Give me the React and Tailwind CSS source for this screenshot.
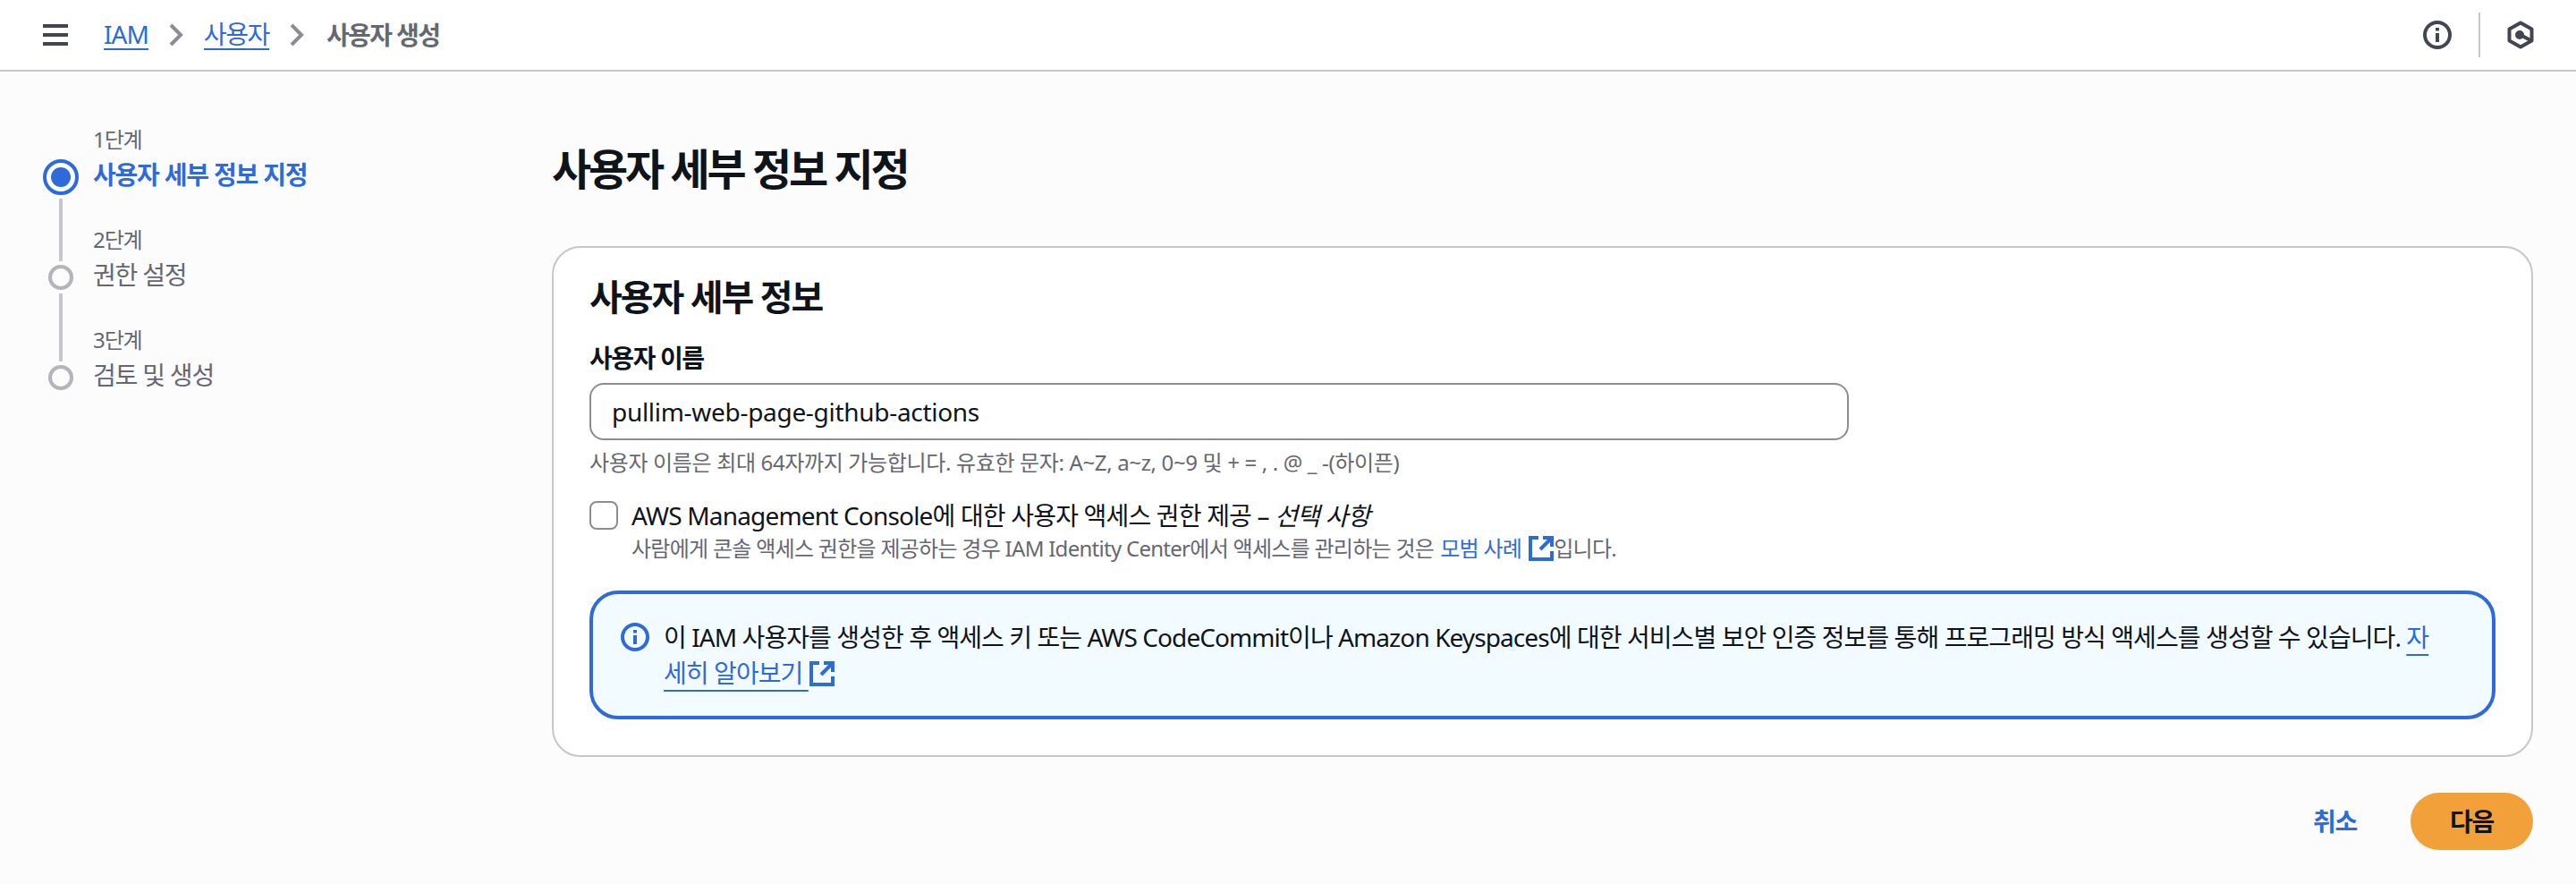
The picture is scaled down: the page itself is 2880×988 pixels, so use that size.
const steps = [
    { step: '1단계', label: '사용자 세부 정보 지정', active: true },
    { step: '2단계', label: '권한 설정' },
    { step: '3단계', label: '검토 및 생성' },
];

function ExternalIcon({ className }) {
    return (
        <svg viewBox="0 0 28 28" fill="none" stroke="currentColor" strokeWidth="4" className={className}>
            <path d="M11 2H2v24h24V17" />
            <path d="M16 2h10v10" />
            <path d="M26 2 13 15" />
        </svg>
    );
}

function Chevron() {
    return (
        <svg viewBox="0 0 16 26" className="mx-[23px] h-[26px] w-[16px] text-[#8c8c94]" fill="none" stroke="currentColor" strokeWidth="4">
            <path d="m2 2 11 11L2 24" />
        </svg>
    );
}

function Header() {
    return (
        <header className="flex h-[80px] items-center border-b-2 border-[#c6c6cd] bg-white pl-[48px] pr-[47px]">
            <svg viewBox="0 0 28 24" className="h-[24px] w-[28px] text-[#424650]" fill="currentColor">
                <rect width="28" height="4" />
                <rect y="10" width="28" height="4" />
                <rect y="20" width="28" height="4" />
            </svg>
            <nav className="ml-[40px] flex items-center text-[28px] leading-[40px]">
                <a className="border-b-2 border-[#2e6bd9] leading-[32px] tracking-[-1px] text-[#2e6bd9]">IAM</a>
                <Chevron />
                <a className="border-b-2 border-[#2e6bd9] leading-[32px] tracking-[-1.4px] text-[#2e6bd9]">사용자</a>
                <Chevron />
                <span className="ml-[2px] font-bold tracking-[-1.6px] text-[#656871]">사용자 생성</span>
            </nav>
            <div className="ml-auto flex items-center">
                <svg viewBox="0 0 32 32" className="h-[32px] w-[32px] text-[#424650]" fill="none" stroke="currentColor" strokeWidth="4">
                    <circle cx="16" cy="16" r="14" />
                    <path d="M16 14v10" />
                    <path d="M16 8v3.5" />
                </svg>
                <div className="mx-[30px] h-[50px] w-[2px] bg-[#c6c6cd]" />
                <svg viewBox="0 0 30 32" className="h-[32px] w-[30px] text-[#424650]" fill="none" stroke="currentColor" strokeWidth="4">
                    <path d="M15 2.5 27.5 9.5v13L15 29.5 2.5 22.5v-13z" strokeLinejoin="round" />
                    <circle cx="14" cy="16" r="3" fill="currentColor" />
                    <path d="m15 16 11 6" />
                </svg>
            </div>
        </header>
    );
}

// markers and texts are two columns because the connector lines don't follow the text rows
function Stepper() {
    return (
        <aside className="flex w-[569px] shrink-0">
            <div className="flex w-[40px] flex-col items-center pt-[98px]">
                <div className="flex h-[40px] w-[40px] items-center justify-center rounded-full border-[4px] border-[#2e6bd9]">
                    <div className="h-[22px] w-[22px] rounded-full bg-[#2e6bd9]" />
                </div>
                <div className="my-[4px] h-[70px] w-[4px] bg-[#c6c6cd]" />
                <div className="h-[28px] w-[28px] rounded-full border-[4px] border-[#b4b4bb]" />
                <div className="my-[4px] h-[76px] w-[4px] bg-[#c6c6cd]" />
                <div className="h-[28px] w-[28px] rounded-full border-[4px] border-[#b4b4bb]" />
            </div>
            <div className="ml-[16px] flex flex-col gap-[39px] pt-[62px]">
                {steps.map((s) => (
                    <div key={s.step}>
                        <div className="text-[24px] leading-[28px] tracking-[-1.1px] text-[#656871]">{s.step}</div>
                        <div className={`mt-[5px] text-[28px] leading-[40px] tracking-[-1.2px] ${s.active ? 'font-bold text-[#2e6bd9]' : 'text-[#656871]'}`}>
                            {s.label}
                        </div>
                    </div>
                ))}
            </div>
        </aside>
    );
}

export default function App() {
    return (
        <div className="h-[988px] overflow-hidden bg-[#fcfcfd] font-['Noto_Sans','Noto_Sans_CJK_KR',sans-serif] text-[#0f141a]">
            <Header />
            <div className="flex px-[48px]">
                <Stepper />
                <main className="min-w-0 flex-1">
                    <h1 className="mt-[81px] text-[48px] font-bold leading-[56px] tracking-[-3.1px]">사용자 세부 정보 지정</h1>
                    <section className="mt-[58px] rounded-[32px] border-2 border-[#c6c6cd] bg-white px-[40px] pb-[40px] pt-[31px]">
                        <h2 className="text-[40px] font-bold leading-[48px] tracking-[-2px]">사용자 세부 정보</h2>
                        <label className="mt-[24px] block text-[28px] font-bold leading-[40px] tracking-[-1.4px]">사용자 이름</label>
                        <div className="mt-[8px] flex h-[64px] w-[1408px] items-center rounded-[16px] border-2 border-[#8c8c94] bg-white px-[23px] text-[28px] tracking-[-0.3px]">
                            pullim-web-page-github-actions
                        </div>
                        <p className="mt-[7px] text-[24px] leading-[36px] tracking-[-0.35px] text-[#656871]">
                            사용자 이름은 최대 64자까지 가능합니다. 유효한 문자: A~Z, a~z, 0~9 및 + = , . @ _ -(하이픈)
                        </p>
                        <div className="mt-[22px] flex">
                            <div className="mt-[3px] h-[32px] w-[32px] rounded-[8px] border-2 border-[#8c8c94] bg-white" />
                            <div className="ml-[15px]">
                                <div className="mt-[-1px] text-[28px] leading-[40px] tracking-[-0.82px]">
                                    AWS Management Console에 대한 사용자 액세스 권한 제공 – <em>선택 사항</em>
                                </div>
                                <div className="mt-[-1px] flex items-center text-[24px] leading-[36px] tracking-[-0.72px] text-[#656871]">
                                    사람에게 콘솔 액세스 권한을 제공하는 경우 IAM Identity Center에서 액세스를 관리하는 것은
                                    <a className="ml-[7px] text-[#2e6bd9]">모범 사례</a>
                                    <ExternalIcon className="ml-[8px] h-[28px] w-[28px] text-[#2e6bd9]" />
                                    입니다.
                                </div>
                            </div>
                        </div>
                        <div className="mt-[29px] flex h-[144px] rounded-[32px] border-[4px] border-[#2e6bd9] bg-[#f2fbff] pl-[31px] pt-[32px]">
                            <svg viewBox="0 0 32 32" className="h-[32px] w-[32px] shrink-0 text-[#2e6bd9]" fill="none" stroke="currentColor" strokeWidth="4">
                                <circle cx="16" cy="16" r="14" />
                                <path d="M16 14v10" />
                                <path d="M16 8v3.5" />
                            </svg>
                            <p className="ml-[16px] mt-[-4px] whitespace-nowrap text-[28px] leading-[40px] tracking-[-0.92px]">
                                이 IAM 사용자를 생성한 후 액세스 키 또는 AWS CodeCommit이나 Amazon Keyspaces에 대한 서비스별 보안 인증 정보를 통해 프로그래밍 방식 액세스를 생성할 수 있습니다.{' '}
                                <a className="text-[#2e6bd9] underline decoration-2 underline-offset-[8px]">자<br />세히 알아보기 </a>
                                <ExternalIcon className="ml-[1px] inline h-[28px] w-[28px] align-[-4px] text-[#2e6bd9]" />
                            </p>
                        </div>
                    </section>
                    <div className="mt-[40px] flex items-center justify-end">
                        <button className="text-[28px] font-bold tracking-[-1.2px] text-[#2e6bd9]">취소</button>
                        <button className="ml-[60px] h-[64px] w-[137px] rounded-full bg-[#f2a03a] text-[28px] font-bold tracking-[-1.2px] text-[#0f141a]">다음</button>
                    </div>
                </main>
            </div>
        </div>
    );
}
